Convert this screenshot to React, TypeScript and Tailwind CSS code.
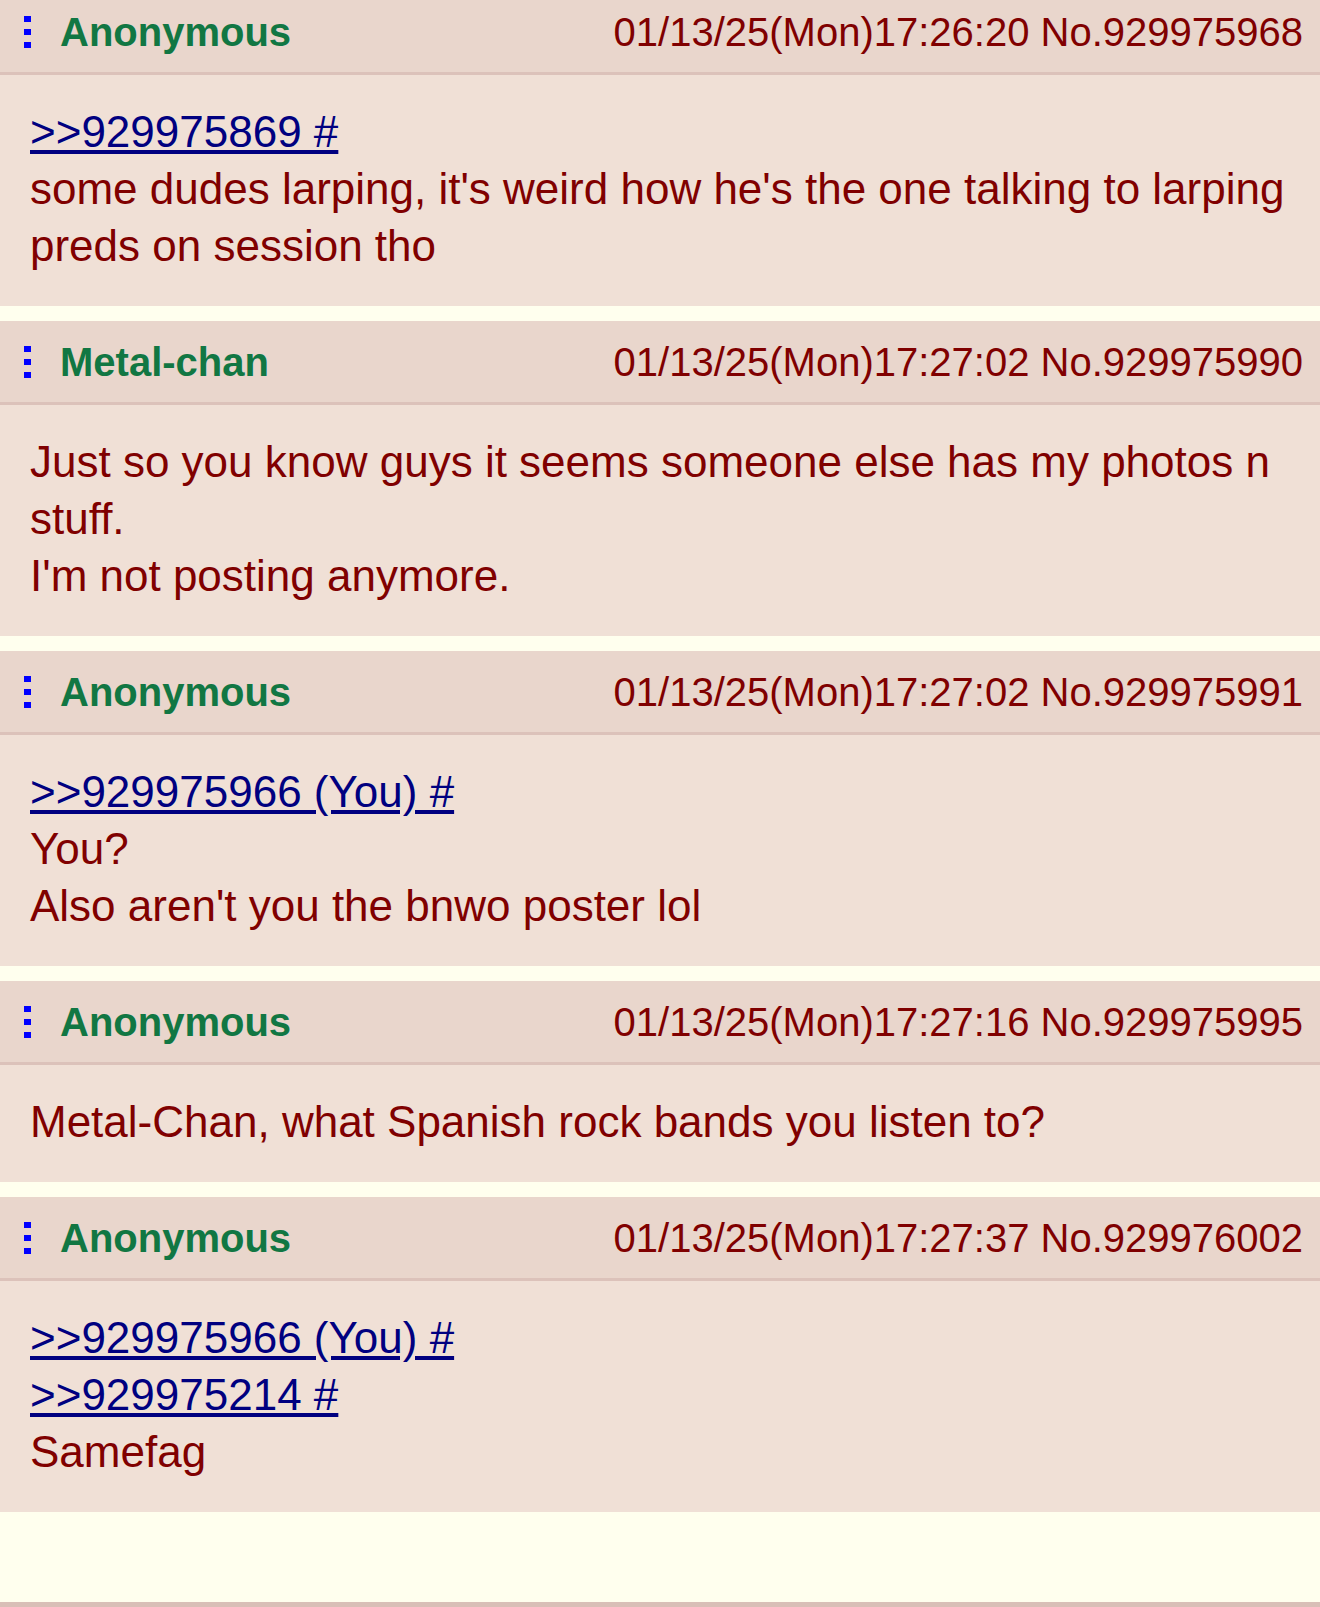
import React from "react";

type Post = {
  name: string;
  date: string;
  no: string;
  lines: { text: string; link?: boolean }[];
};

const posts: Post[] = [
  {
    name: "Anonymous",
    date: "01/13/25(Mon)17:26:20",
    no: "929975968",
    lines: [
      { text: ">>929975869 #", link: true },
      { text: "some dudes larping, it's weird how he's the one talking to larping preds on session tho" },
    ],
  },
  {
    name: "Metal-chan",
    date: "01/13/25(Mon)17:27:02",
    no: "929975990",
    lines: [
      { text: "Just so you know guys it seems someone else has my photos n stuff." },
      { text: "I'm not posting anymore." },
    ],
  },
  {
    name: "Anonymous",
    date: "01/13/25(Mon)17:27:02",
    no: "929975991",
    lines: [
      { text: ">>929975966 (You) #", link: true },
      { text: "You?" },
      { text: "Also aren't you the bnwo poster lol" },
    ],
  },
  {
    name: "Anonymous",
    date: "01/13/25(Mon)17:27:16",
    no: "929975995",
    lines: [{ text: "Metal-Chan, what Spanish rock bands you listen to?" }],
  },
  {
    name: "Anonymous",
    date: "01/13/25(Mon)17:27:37",
    no: "929976002",
    lines: [
      { text: ">>929975966 (You) #", link: true },
      { text: ">>929975214 #", link: true },
      { text: "Samefag" },
    ],
  },
];

function MenuDots() {
  return (
    <div className="flex w-[7px] flex-col gap-[7px]">
      <span className="block h-[6px] w-[7px] bg-[#0000ff]" />
      <span className="block h-[6px] w-[7px] bg-[#0000ff]" />
      <span className="block h-[6px] w-[7px] bg-[#0000ff]" />
    </div>
  );
}

function PostCard({ post }: { post: Post }) {
  return (
    <div className="bg-[#f0e0d6]">
      <div className="flex h-[81px] items-center justify-between bg-[#e9d6cc] pl-[24px] pr-[17px]">
        <div className="flex items-center gap-[29px]">
          <MenuDots />
          <span className="text-[40px] font-bold leading-[40px] text-[#117743]">{post.name}</span>
        </div>
        <span className="text-[40px] leading-[40px] text-[#800000]">
          {post.date} No.{post.no}
        </span>
      </div>
      <div className="border-t-[3px] border-[#dcc2ba] pl-[30px] pr-[24px] pt-[28px] pb-[32px] text-[44px] leading-[57px] text-[#800000]">
        {post.lines.map((l, i) =>
          l.link ? (
            <div key={i}>
              <a className="text-[#000080] underline">{l.text}</a>
            </div>
          ) : (
            <div key={i}>{l.text}</div>
          )
        )}
      </div>
    </div>
  );
}

export default function App() {
  return (
    <div className="min-h-screen overflow-hidden bg-[#ffffee] font-['Liberation_Sans',Arial,sans-serif]">
      <div className="-mt-[9px] flex flex-col gap-[15px]">
        {posts.map((p) => (
          <PostCard key={p.no} post={p} />
        ))}
      </div>
      <div className="h-[90px]" />
      <div className="h-[10px] border-t-[5px] border-[#d9bfb7]" />
    </div>
  );
}
